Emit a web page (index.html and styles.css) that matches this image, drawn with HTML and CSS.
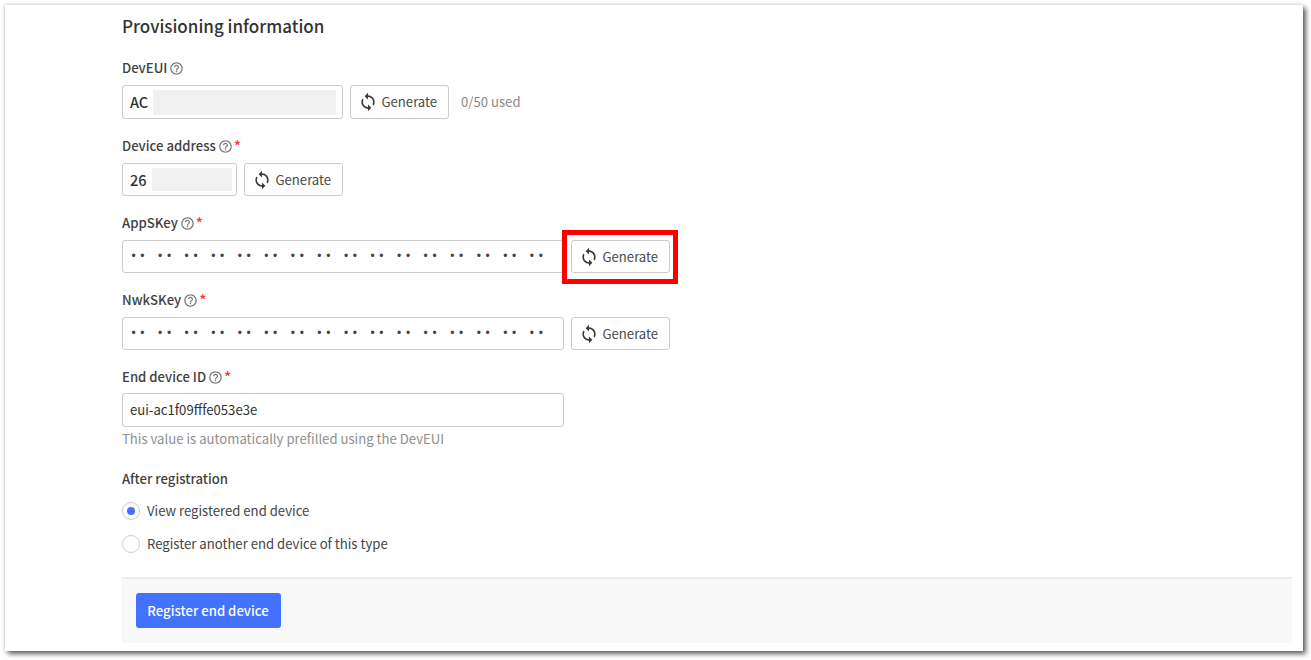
FILE: index.html
```html
<!DOCTYPE html>
<html lang="en">
<head>
    <meta charset="UTF-8">
    <meta name="viewport" content="width=device-width, initial-scale=1.0">
    <title>Register end device</title>
    <link rel="stylesheet" href="styles.css">
</head>
<body>
    <svg class="defs" width="0" height="0">
        <symbol id="icon-sync" viewBox="0 0 24 24">
            <path d="M12 4V1L8 5l4 4V6c3.31 0 6 2.69 6 6 0 1.01-.25 1.97-.7 2.8l1.46 1.46C19.54 15.03 20 13.57 20 12c0-4.42-3.58-8-8-8zm0 14c-3.31 0-6-2.69-6-6 0-1.01.25-1.97.7-2.8L5.24 7.74C4.46 8.97 4 10.43 4 12c0 4.42 3.58 8 8 8v3l4-4-4-4v3z"/>
        </symbol>
        <symbol id="icon-help" viewBox="0 0 24 24">
            <path d="M11 18h2v-2h-2v2zm1-16C6.48 2 2 6.48 2 12s4.48 10 10 10 10-4.48 10-10S17.52 2 12 2zm0 18c-4.41 0-8-3.59-8-8s3.59-8 8-8 8 3.59 8 8-3.59 8-8 8zm0-14c-2.21 0-4 1.79-4 4h2c0-1.1.9-2 2-2s2 .9 2 2c0 2-3 1.75-3 5h2c0-2.25 3-2.5 3-5 0-2.21-1.79-4-4-4z"/>
        </symbol>
    </svg>

    <main class="card">
        <h2 class="title">Provisioning information</h2>

        <div class="field">
            <label class="label">DevEUI <svg class="help"><use href="#icon-help"/></svg></label>
            <div class="row">
                <div class="input input-eui"><b>AC</b><span class="redacted"></span></div>
                <button class="button"><svg class="sync"><use href="#icon-sync"/></svg>Generate</button>
                <span class="used">0/50 used</span>
            </div>
        </div>

        <div class="field">
            <label class="label">Device address <svg class="help"><use href="#icon-help"/></svg> <span class="req">*</span></label>
            <div class="row">
                <div class="input input-addr"><b>26</b><span class="redacted"></span></div>
                <button class="button"><svg class="sync"><use href="#icon-sync"/></svg>Generate</button>
            </div>
        </div>

        <div class="field">
            <label class="label">AppSKey <svg class="help"><use href="#icon-help"/></svg> <span class="req">*</span></label>
            <div class="row">
                <div class="input input-key">•• •• •• •• •• •• •• •• •• •• •• •• •• •• •• ••</div>
                <div class="marked">
                    <button class="button"><svg class="sync"><use href="#icon-sync"/></svg>Generate</button>
                    <div class="marker"></div>
                </div>
            </div>
        </div>

        <div class="field">
            <label class="label">NwkSKey <svg class="help"><use href="#icon-help"/></svg> <span class="req">*</span></label>
            <div class="row">
                <div class="input input-key">•• •• •• •• •• •• •• •• •• •• •• •• •• •• •• ••</div>
                <button class="button"><svg class="sync"><use href="#icon-sync"/></svg>Generate</button>
            </div>
        </div>

        <div class="field field-id">
            <label class="label">End device ID <svg class="help"><use href="#icon-help"/></svg> <span class="req">*</span></label>
            <div class="input input-id">eui-ac1f09fffe053e3e</div>
            <div class="hint">This value is automatically prefilled using the DevEUI</div>
        </div>

        <div class="after">
            <div class="label">After registration</div>
            <div class="radio-row"><span class="radio radio-on"></span>View registered end device</div>
            <div class="radio-row"><span class="radio"></span>Register another end device of this type</div>
        </div>

        <div class="footer">
            <button class="button-primary">Register end device</button>
        </div>
    </main>
</body>
</html>
```

FILE: styles.css
```css
html, body {
    margin: 0;
    height: 660px;
    overflow: hidden;
    background: #fff;
}
body {
    font-family: "Noto Sans CJK SC", "Open Sans", sans-serif;
    font-size: 13.15px;
    line-height: 20px;
    color: #3f3f3f;
}
.defs {
    position: absolute;
}

.card {
    box-sizing: border-box;
    width: 1298px;
    height: 646px;
    margin: 5px 0 0 5px;
    padding: 9px 11px 0 117px;
    background: #fff;
    box-shadow: 3px 3px 5px rgba(0, 0, 0, 0.6), 0 0 4px rgba(0, 0, 0, 0.2);
}
.title {
    margin: 0 0 20px;
    font-size: 17px;
    line-height: 24px;
    font-weight: 500;
    color: #333;
}

.field {
    margin-bottom: 17px;
}
.label {
    display: block;
    height: 20px;
    margin-bottom: 7px;
    font-weight: 500;
    color: #3f3f3f;
}
.help {
    width: 15px;
    height: 15px;
    margin-left: -1px;
    vertical-align: -3px;
    fill: #777;
}
.req {
    margin-left: -2px;
    font-size: 15px;
    vertical-align: -1px;
    color: #f33;
}

.row {
    display: flex;
    align-items: stretch;
    gap: 7px;
}
.input {
    box-sizing: border-box;
    display: flex;
    align-items: center;
    height: 33px;
    padding: 0 7px;
    background: #fff;
    border: 1px solid #ccc;
    border-radius: 3px;
    color: #333;
}
.input b {
    flex: none;
    width: 23px;
    font-weight: 500;
    font-size: 14.5px;
}
.redacted {
    flex: none;
    height: 23px;
    background: #f0f0f0;
}
.input-eui {
    width: 221px;
    height: 34px;
}
.input-eui .redacted {
    width: 183px;
    height: 25px;
}
.input-addr {
    width: 115px;
}
.input-addr b {
    width: 22px;
}
.input-addr .redacted {
    width: 80px;
}
.input-key {
    width: 442px;
    letter-spacing: 1.65px;
    font-family: "Liberation Mono", monospace;
    font-size: 12px;
    color: #444;
    white-space: pre;
}
.input-id {
    width: 442px;
    height: 34px;
}

.button {
    box-sizing: border-box;
    display: flex;
    align-items: center;
    width: 99px;
    padding: 0 0 0 7px;
    background: #fff;
    border: 1px solid #ccc;
    border-radius: 3px;
    font: inherit;
    color: #4a4a4a;
}
.sync {
    width: 20px;
    height: 20px;
    margin-right: 3.5px;
    fill: #3a3a3a;
}
.used {
    align-self: center;
    margin-left: 5px;
    color: #8a8a8a;
}

/* red frame drawn over the screenshot */
.marked {
    position: relative;
    display: flex;
}
.marker {
    position: absolute;
    top: -10px;
    left: -9px;
    width: 116px;
    height: 54px;
    box-sizing: border-box;
    border: 5px solid #f00;
}

.field-id {
    margin-bottom: 0;
}
.field-id .label {
    margin-bottom: 6px;
}
.hint {
    margin-top: 2px;
    color: #8f8f8f;
}
.after {
    margin-top: 20px;
}
.after .label {
    margin-bottom: 5px;
}
.radio-row {
    display: flex;
    align-items: center;
    gap: 7px;
    height: 33px;
    color: #444;
}
.radio {
    box-sizing: border-box;
    display: inline-flex;
    align-items: center;
    justify-content: center;
    width: 18px;
    height: 18px;
    border: 1px solid #ccc;
    border-radius: 50%;
}
.radio-on::after {
    content: "";
    width: 8px;
    height: 8px;
    border-radius: 50%;
    background: #4372f5;
}

.footer {
    box-sizing: border-box;
    height: 66px;
    margin-top: 17px;
    padding: 14px;
    background: #f8f8f8;
    border-top: 2px solid #ececec;
}
.button-primary {
    width: 145px;
    height: 35px;
    padding: 0 1px 0 0;
    background: #4372ff;
    border: none;
    border-radius: 3px;
    font: inherit;
    font-weight: 500;
    color: #fff;
}
```
